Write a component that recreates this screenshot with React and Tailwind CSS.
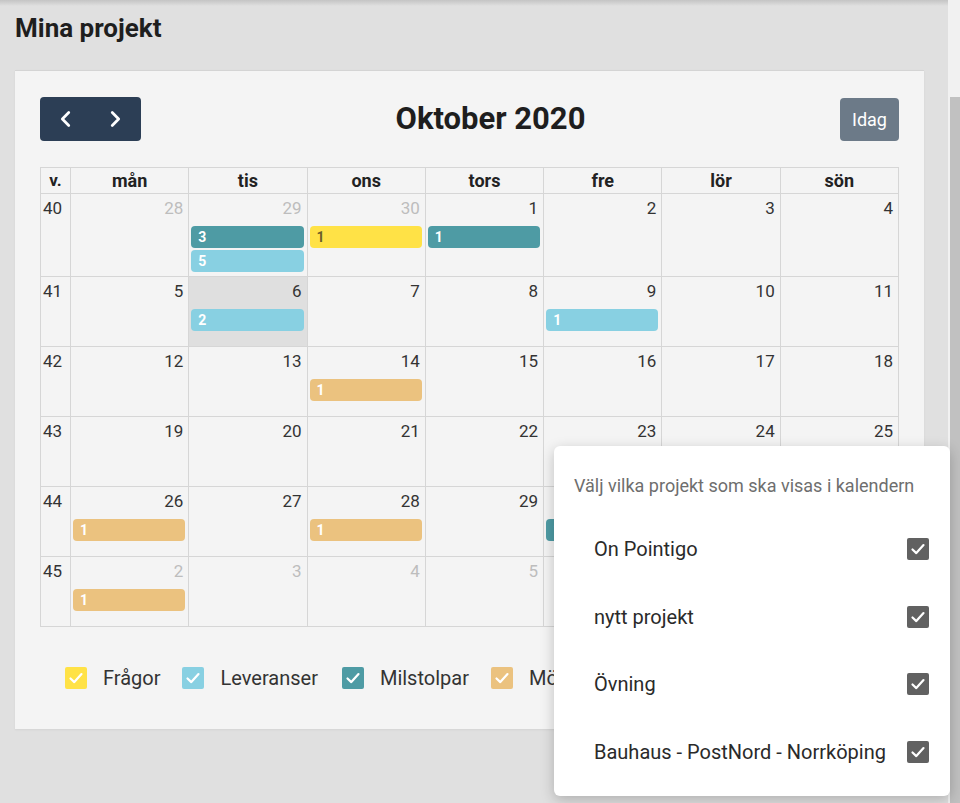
import React from "react";

const COLORS = {
  teal: "bg-[#4e9ba4] text-white",
  blue: "bg-[#88d0e2] text-white",
  yellow: "bg-[#ffe246] text-[#6b5f2a]",
  tan: "bg-[#ebc27f] text-white",
};

const weeks = [
  {
    w: 40,
    days: [
      { d: 28, o: true },
      { d: 29, o: true, ev: [["teal", "3"], ["blue", "5"]] },
      { d: 30, o: true, ev: [["yellow", "1"]] },
      { d: 1, ev: [["teal", "1"]] },
      { d: 2 },
      { d: 3 },
      { d: 4 },
    ],
  },
  {
    w: 41,
    days: [
      { d: 5 },
      { d: 6, today: true, ev: [["blue", "2"]] },
      { d: 7 },
      { d: 8 },
      { d: 9, ev: [["blue", "1"]] },
      { d: 10 },
      { d: 11 },
    ],
  },
  {
    w: 42,
    days: [
      { d: 12 },
      { d: 13 },
      { d: 14, ev: [["tan", "1"]] },
      { d: 15 },
      { d: 16 },
      { d: 17 },
      { d: 18 },
    ],
  },
  {
    w: 43,
    days: [{ d: 19 }, { d: 20 }, { d: 21 }, { d: 22 }, { d: 23 }, { d: 24 }, { d: 25 }],
  },
  {
    w: 44,
    days: [
      { d: 26, ev: [["tan", "1"]] },
      { d: 27 },
      { d: 28, ev: [["tan", "1"]] },
      { d: 29 },
      { d: 30, ev: [["teal", "1"]] },
      { d: 31 },
      { d: 1, o: true },
    ],
  },
  {
    w: 45,
    days: [
      { d: 2, o: true, ev: [["tan", "1"]] },
      { d: 3, o: true },
      { d: 4, o: true },
      { d: 5, o: true },
      { d: 6, o: true },
      { d: 7, o: true },
      { d: 8, o: true },
    ],
  },
];

const dayNames = ["mån", "tis", "ons", "tors", "fre", "lör", "sön"];

function Check({ className }) {
  return (
    <svg viewBox="0 0 22 22" className={className} fill="none">
      <path d="M5.5 11.5l3.8 3.6 7.2-8" stroke="white" strokeWidth="2.2" strokeLinecap="round" strokeLinejoin="round" />
    </svg>
  );
}

function Box({ color }) {
  return (
    <div className={`w-[22px] h-[22px] shrink-0 rounded-[2px] flex items-center justify-center ${color}`}>
      <Check className="w-[22px] h-[22px]" />
    </div>
  );
}

export default function App() {
  return (
    <div
      className="relative w-[960px] h-[803px] overflow-hidden bg-[#e0e0e0] flex"
      style={{ fontFamily: "Roboto, 'Liberation Sans', sans-serif" }}
    >
      <div className="flex-1 flex flex-col">
        <div className="h-[6px] bg-linear-to-b from-[#c4c4c4] to-[#e0e0e0]" />
        <h1 className="ml-[15px] mt-[7px] text-[26px] leading-[30px] font-bold text-[#1e1e1e]">Mina projekt</h1>
        <div className="ml-[15px] mt-[27px] w-[909px] h-[659px] bg-[#f4f4f4] border-t border-[#d4d4d4] shadow-[0_1px_2px_rgba(0,0,0,0.06)] px-[25px] pt-[26px]">
          <div className="flex items-center justify-between h-[44px]">
            <div className="flex items-center w-[101px] h-[44px] rounded-[4px] bg-[#2c3e55]">
              <div className="w-1/2 flex justify-center pl-[2px]">
                <svg viewBox="0 0 24 24" className="w-[22px] h-[22px]" fill="none" stroke="white" strokeWidth="3" strokeLinecap="round" strokeLinejoin="round">
                  <path d="M15 5l-7 7 7 7" />
                </svg>
              </div>
              <div className="w-1/2 flex justify-center pr-[2px]">
                <svg viewBox="0 0 24 24" className="w-[22px] h-[22px]" fill="none" stroke="white" strokeWidth="3" strokeLinecap="round" strokeLinejoin="round">
                  <path d="M9 5l7 7-7 7" />
                </svg>
              </div>
            </div>
            <div className="text-[31px] font-bold text-[#1e1e1e] leading-[44px]">Oktober 2020</div>
            <div className="w-[59px] h-[43px] rounded-[4px] bg-[#6c7a88] text-white text-[18px] flex items-center justify-center">
              Idag
            </div>
          </div>

          <div className="mt-[26px] w-[859px] border-l border-t border-[#d6d6d6] grid grid-cols-[30px_repeat(7,1fr)] text-[#333]">
            <div className="h-[26px] border-r border-b border-[#d6d6d6] text-[17px] font-bold text-[#222] flex items-center justify-center">
              v.
            </div>
            {dayNames.map((n) => (
              <div
                key={n}
                className="h-[26px] border-r border-b border-[#d6d6d6] text-[18px] font-bold text-[#222] flex items-center justify-center"
              >
                {n}
              </div>
            ))}
            {weeks.map((wk) => (
              <React.Fragment key={wk.w}>
                <div className="border-r border-b border-[#d6d6d6] pl-[2px] pt-[2px] text-[17px] leading-[24px] text-[#333]">
                  {wk.w}
                </div>
                {wk.days.map((day, i) => (
                  <div
                    key={i}
                    className={`min-h-[70px] border-r border-b border-[#d6d6d6] pt-[2px] pb-[4px] ${day.today ? "bg-[#dfdfdf]" : ""}`}
                  >
                    <div className={`text-right pr-[5px] text-[17px] leading-[24px] ${day.o ? "text-[#bdbdbd]" : "text-[#333]"}`}>
                      {day.d}
                    </div>
                    {day.ev && (
                      <div className="mt-[6px] flex flex-col gap-[2px]">
                        {day.ev.map(([c, t], k) => (
                          <div
                            key={k}
                            className={`ml-[2px] mr-[3px] h-[22px] rounded-[4px] pl-[7px] text-[14px] font-bold leading-[22px] ${COLORS[c]}`}
                          >
                            {t}
                          </div>
                        ))}
                      </div>
                    )}
                  </div>
                ))}
              </React.Fragment>
            ))}
          </div>

          <div className="mt-[36px] ml-[25px] flex items-center text-[20px] text-[#333]">
            <Box color="bg-[#ffe246]" />
            <span className="ml-[16px]">Frågor</span>
            <div className="ml-[22px]" />
            <Box color="bg-[#88d0e2]" />
            <span className="ml-[16px]">Leveranser</span>
            <div className="ml-[24px]" />
            <Box color="bg-[#4e9ba4]" />
            <span className="ml-[16px]">Milstolpar</span>
            <div className="ml-[22px]" />
            <Box color="bg-[#ebc27f]" />
            <span className="ml-[16px]">Möten</span>
          </div>
        </div>
      </div>

      <div className="w-[12px] bg-[#f1f1f1] flex flex-col pl-[2px]">
        <div className="mt-[97px] flex-1 bg-[#c1c1c1]" />
      </div>

      <div className="absolute left-[554px] top-[446px] w-[396px] h-[350px] bg-white rounded-[6px] shadow-[0_4px_14px_rgba(0,0,0,0.22)] pt-[28px]">
        <div className="pl-[20px] text-[18px] leading-[24px] text-[#6e6e6e] whitespace-nowrap">
          Välj vilka projekt som ska visas i kalendern
        </div>
        <div className="mt-[17px]">
          {["On Pointigo", "nytt projekt", "Övning", "Bauhaus - PostNord - Norrköping"].map((p) => (
            <div key={p} className="h-[67.7px] flex items-center justify-between pl-[40px] pr-[21px] text-[20px] text-[#2a2a2a]">
              <span className="whitespace-nowrap">{p}</span>
              <Box color="bg-[#616161]" />
            </div>
          ))}
        </div>
      </div>
    </div>
  );
}
